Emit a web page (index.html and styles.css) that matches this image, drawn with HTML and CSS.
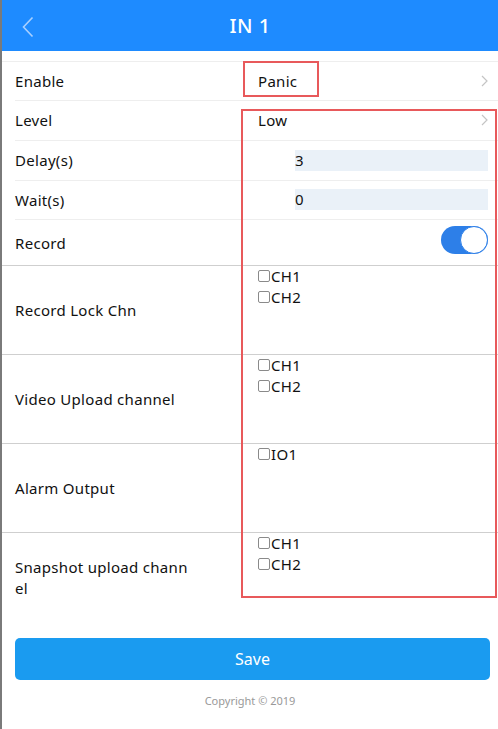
FILE: index.html
```html
<!DOCTYPE html>
<html>
<head>
<meta charset="utf-8">
<link rel="stylesheet" href="styles.css">
</head>
<body>
<div class="page">
  <header class="topbar">
    <span class="back"><svg width="12" height="22" viewBox="0 0 12 22"><path d="M10.5 1.5 L1.5 11 L10.5 20.5" fill="none" stroke="#a9d0ff" stroke-width="1.6"/></svg></span>
    <h1 class="title">IN 1</h1>
  </header>
  <div class="list">
    <div class="row short h39">
      <div class="label">Enable</div>
      <div class="value">Panic</div>
      <span class="chev"><svg width="7" height="12" viewBox="0 0 7 12"><path d="M1 1 L6 6 L1 11" fill="none" stroke="#c4c4c4" stroke-width="1.2"/></svg></span>
    </div>
    <div class="row short">
      <div class="label">Level</div>
      <div class="value">Low</div>
      <span class="chev"><svg width="7" height="12" viewBox="0 0 7 12"><path d="M1 1 L6 6 L1 11" fill="none" stroke="#c4c4c4" stroke-width="1.2"/></svg></span>
    </div>
    <div class="row short">
      <div class="label">Delay(s)</div>
      <div class="value"><div class="input">3</div></div>
    </div>
    <div class="row short h39">
      <div class="label">Wait(s)</div>
      <div class="value"><div class="input">0</div></div>
    </div>
    <div class="row record">
      <div class="label">Record</div>
      <div class="value end"><span class="toggle"><span class="knob"></span></span></div>
    </div>
    <div class="row tall">
      <div class="label">Record Lock Chn</div>
      <div class="value checks">
        <label class="check"><span class="box"></span>CH1</label>
        <label class="check"><span class="box"></span>CH2</label>
      </div>
    </div>
    <div class="row tall">
      <div class="label">Video Upload channel</div>
      <div class="value checks">
        <label class="check"><span class="box"></span>CH1</label>
        <label class="check"><span class="box"></span>CH2</label>
      </div>
    </div>
    <div class="row tall">
      <div class="label">Alarm Output</div>
      <div class="value checks">
        <label class="check"><span class="box"></span>IO1</label>
      </div>
    </div>
    <div class="row tall last">
      <div class="label narrow">Snapshot upload channel</div>
      <div class="value checks">
        <label class="check"><span class="box"></span>CH1</label>
        <label class="check"><span class="box"></span>CH2</label>
      </div>
    </div>
  </div>
  <div class="actions">
    <button class="save">Save</button>
  </div>
  <footer class="copy">Copyright © 2019</footer>
  <div class="mark mark-a"></div>
  <div class="mark mark-b"></div>
</div>
</body>
</html>
```
FILE: styles.css
```css
* { box-sizing: border-box; }
html, body { margin: 0; padding: 0; background: #fff; }
body {
  font-family: "Noto Sans", "Open Sans", sans-serif;
  color: #111;
}
.page {
  position: relative;
  width: 498px;
  height: 729px;
  border-left: 2px solid #7a7a7a;
  overflow: hidden;
}
.topbar {
  height: 51px;
  background: #1e8bff;
  display: flex;
  align-items: center;
  justify-content: center;
  position: relative;
}
.back {
  position: absolute;
  left: 20px;
  top: 16px;
  display: flex;
}
.title {
  margin: 0;
  color: #fff;
  font-size: 20px;
  font-weight: 500;
  letter-spacing: 0.5px;
}
.list {
  margin-top: 10px;
  border-top: 1px solid #eeeeee;
}
.row {
  display: flex;
  align-items: center;
  position: relative;
  font-size: 15px;
  letter-spacing: 0.3px;
}
.row.short {
  height: 40px;
  margin-left: 13px;
  border-bottom: 1px solid #eeeeee;
  padding-bottom: 1px;
}
.row.short.h39 { height: 39px; }
.row.record {
  height: 46px;
  padding-left: 13px;
  border-bottom: 1px solid #cfcfcf;
}
.row.tall {
  height: 89px;
  padding-left: 13px;
  border-bottom: 1px solid #cfcfcf;
  align-items: stretch;
}
.row.tall.last { border-bottom: none; }
.label {
  width: 243px;
  flex: none;
  display: flex;
  align-items: center;
}
.label.narrow {
  width: 180px;
  margin-right: 63px;
  word-break: break-all;
  line-height: 21px;
}
.value {
  flex: 1;
  padding-right: 10px;
  display: flex;
  align-items: center;
}
.end { justify-content: flex-end; }
.chev {
  position: absolute;
  right: 10px;
  top: 13px;
  display: flex;
}
.input {
  margin-left: 37px;
  flex: 1;
  height: 21px;
  background: #eaf1f8;
  line-height: 21px;
  font-size: 15px;
}
.toggle {
  width: 47px;
  height: 28px;
  border-radius: 14px;
  background: #2d7fe8;
  position: relative;
  display: block;
  margin-bottom: 5px;
}
.knob {
  position: absolute;
  right: 0;
  top: 0;
  width: 28px;
  height: 28px;
  border-radius: 50%;
  background: #fff;
  border: 1px solid #2d7fe8;
}
.checks {
  flex-direction: column;
  align-items: flex-start;
  justify-content: flex-start;
  padding-top: 0;
}
.check {
  display: flex;
  align-items: center;
  height: 21px;
  line-height: 21px;
  font-size: 15px;
}
.box {
  width: 12px;
  height: 12px;
  border: 1px solid #8a8a8a;
  border-radius: 2px;
  margin-right: 1px;
  margin-top: -1px;
}
.actions {
  padding: 0 8px 0 13px;
  margin-top: 16px;
}
.save {
  width: 100%;
  height: 42px;
  border: none;
  border-radius: 5px;
  background: #1a9bf0;
  color: #fff;
  font-family: inherit;
  font-size: 16px;
  padding: 0;
}
.copy {
  text-align: center;
  color: #999;
  font-size: 11px;
  margin-top: 13px;
}
.mark {
  position: absolute;
  border: 2px solid #e8595b;
  pointer-events: none;
}
.mark-a { left: 241px; top: 61px; width: 76px; height: 36px; }
.mark-b { left: 239px; top: 109px; width: 256px; height: 489px; }
```
